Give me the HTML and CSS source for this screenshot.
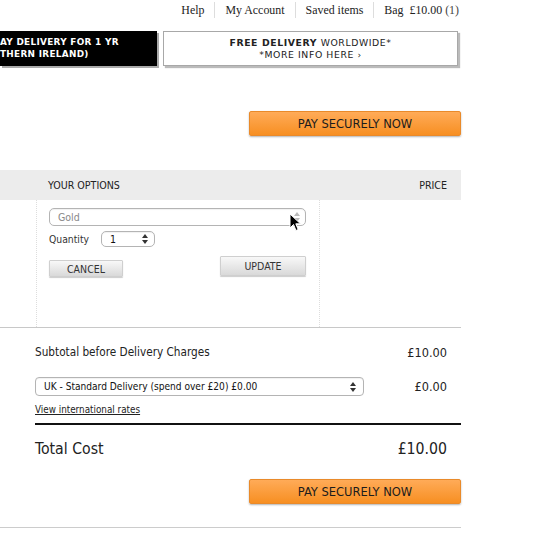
FILE: index.html
```html
<!DOCTYPE html>
<html>
<head>
<meta charset="utf-8">
<link rel="stylesheet" href="styles.css">
</head>
<body>
<div class="page">
  <nav class="toplinks">
    <a class="tl first">Help</a>
    <a class="tl">My Account</a>
    <a class="tl">Saved items</a>
    <a class="tl">Bag&nbsp; £10.00 <span class="count">(1)</span></a>
  </nav>

  <div class="banners">
    <div class="banner dark">
      <div>AY DELIVERY FOR 1 YR</div>
      <div>THERN IRELAND)</div>
    </div>
    <div class="banner light">
      <div><b>FREE DELIVERY</b> WORLDWIDE*</div>
      <div>*MORE INFO HERE ›</div>
    </div>
  </div>

  <div class="pay-row top">
    <button class="pay">PAY SECURELY NOW</button>
  </div>

  <div class="basket-head">
    <span>YOUR OPTIONS</span>
    <span>PRICE</span>
  </div>

  <div class="options-wrap">
    <div class="options">
      <div class="fsel gold"><span>Gold</span><svg class="arr" width="6" height="10" viewBox="0 0 6 10"><path d="M0 4 L3 0 L6 4 Z M0 6 L3 10 L6 6 Z" fill="#bbb"/></svg></div>
      <div class="qty-row">
        <span class="qlabel">Quantity</span>
        <div class="fsel qty"><span>1</span><svg class="arr" width="6" height="10" viewBox="0 0 6 10"><path d="M0 4 L3 0 L6 4 Z M0 6 L3 10 L6 6 Z" fill="#333"/></svg></div>
      </div>
      <div class="btn-row">
        <button class="gbtn cancel">CANCEL</button>
        <button class="gbtn update">UPDATE</button>
      </div>
    </div>
  </div>

  <div class="totals">
    <div class="trow subtotal">
      <span class="label">Subtotal before Delivery Charges</span>
      <span>£10.00</span>
    </div>
    <div class="trow delivery">
      <div class="fsel deliv"><span>UK - Standard Delivery (spend over £20) £0.00</span><svg class="arr" width="6" height="10" viewBox="0 0 6 10"><path d="M0 4 L3 0 L6 4 Z M0 6 L3 10 L6 6 Z" fill="#333"/></svg></div>
      <span>£0.00</span>
    </div>
    <a class="intl">View international rates</a>
    <div class="trow total">
      <span>Total Cost</span>
      <span>£10.00</span>
    </div>
  </div>

  <div class="pay-row bottom">
    <button class="pay">PAY SECURELY NOW</button>
  </div>
  <div class="endline"></div>
</div>

<svg class="cursor" width="12" height="19" viewBox="0 0 12 19">
  <path d="M1 1 L1 15 L4.5 11.5 L7 17.5 L9.2 16.5 L6.8 10.8 L11.5 10.8 Z" fill="#000" stroke="#fff" stroke-width="1"/>
</svg>
</body>
</html>
```

FILE: styles.css
```css
html, body {
  margin: 0;
  padding: 0;
  background: #fff;
}
body {
  font-family: "DejaVu Sans", Verdana, sans-serif;
  font-stretch: condensed;
  color: #222;
  width: 537px;
  height: 537px;
  overflow: hidden;
  position: relative;
}
.page {
  width: 461px;
}

/* top links */
.toplinks {
  display: flex;
  justify-content: flex-end;
  height: 19px;
  align-items: center;
  font-family: "Liberation Serif", "Times New Roman", serif;
  font-stretch: normal;
  font-size: 11.9px;
  color: #222;
  padding-right: 2px;
}
.tl {
  padding: 0 10px;
  border-left: 1px solid #ddd;
  line-height: 16px;
}
.tl.first { border-left: none; }
.tl:last-child { padding-right: 0; }
.count { color: #444; }

/* banners */
.banners {
  display: flex;
  margin-top: 12px;
  gap: 6px;
  height: 36px;
}
.banner {
  box-sizing: border-box;
  height: 35px;
  font-size: 9.3px;
  line-height: 12px;
  letter-spacing: 0.3px;
}
.banner.dark {
  width: 157px;
  background: #000;
  color: #fff;
  font-weight: bold;
  font-stretch: normal;
  font-size: 8.9px;
  padding-top: 5px;
  box-shadow: 2px 2px 0 #aaa;
}
.banner.light {
  width: 295px;
  border: 1px solid #a8a8a8;
  background: #fff;
  color: #222;
  text-align: center;
  font-stretch: normal;
  padding-top: 5px;
  box-shadow: 2px 2px 1px #bbb;
  letter-spacing: 0.6px;
}

/* pay buttons */
.pay-row {
  display: flex;
  justify-content: flex-end;
}
.pay-row.top { margin-top: 44px; }
.pay {
  width: 212px;
  height: 25px;
  border: 1px solid #e98a2a;
  border-radius: 2px;
  background: linear-gradient(#ffab58, #f78f22);
  color: #1c1c1c;
  font-family: "DejaVu Sans", Verdana, sans-serif;
  font-stretch: condensed;
  font-size: 12.8px;
  padding: 0;
  box-shadow: 0 1px 2px rgba(0,0,0,0.3);
}

/* basket header */
.basket-head {
  margin-top: 34px;
  height: 30px;
  background: #ececec;
  display: flex;
  justify-content: space-between;
  align-items: center;
  font-size: 10.6px;
  padding: 0 14px 0 48px;
  color: #222;
}

/* options */
.options-wrap {
  height: 127px;
  border-bottom: 1px solid #c8c8c8;
  padding-left: 36px;
}
.options {
  width: 284px;
  height: 100%;
  box-sizing: border-box;
  border-left: 1px dotted #ddd;
  border-right: 1px dotted #ddd;
  padding: 8px 13px 0 12px;
}
.fsel {
  box-sizing: border-box;
  border: 1px solid #b4b4b4;
  border-radius: 5px;
  display: flex;
  align-items: center;
  justify-content: space-between;
  background: #fff;
  box-shadow: inset 0 1px 1px rgba(0,0,0,0.06);
}
.fsel.gold {
  width: 257px;
  height: 18px;
  padding: 0 5px 0 8px;
  font-size: 10.5px;
  color: #888;
}
.qty-row {
  display: flex;
  align-items: center;
  margin-top: 5px;
  font-size: 10.3px;
}
.qlabel {
  width: 52px;
  color: #333;
}
.fsel.qty {
  width: 54px;
  height: 16px;
  padding: 0 6px 0 8px;
  font-size: 10.5px;
  color: #111;
}
.btn-row {
  display: flex;
  justify-content: space-between;
  align-items: flex-start;
  margin-top: 9px;
  width: 257px;
}
.gbtn {
  font-family: "DejaVu Sans", Verdana, sans-serif;
  font-stretch: condensed;
  font-size: 10.5px;
  color: #333;
  border: 1px solid #cfcfcf;
  border-radius: 1px;
  background: linear-gradient(#f8f8f8, #d9d9d9);
  box-shadow: 0 1px 1px rgba(0,0,0,0.2);
  padding: 0;
}
.gbtn.cancel {
  width: 74px;
  height: 17px;
  margin-top: 4px;
}
.gbtn.update {
  width: 86px;
  height: 20px;
}

/* totals */
.totals {
  padding: 0 14px 0 35px;
}
.trow {
  display: flex;
  justify-content: space-between;
  align-items: center;
}
.trow.subtotal {
  margin-top: 15px;
  height: 18px;
  font-size: 12.6px;
}
.trow.subtotal .label {
  font-size: 11.7px;
}
.trow.delivery {
  margin-top: 16px;
  height: 19px;
  font-size: 12.6px;
}
.fsel.deliv {
  width: 329px;
  height: 19px;
  border-radius: 4px;
  padding: 0 7px 0 8px;
  font-size: 10.1px;
  color: #111;
}
.intl {
  display: block;
  margin-top: 8px;
  font-size: 9.8px;
  color: #222;
  text-decoration: underline;
  line-height: 12px;
  padding-bottom: 7px;
  border-bottom: 2px solid #111;
  margin-right: -14px;
}
.trow.total {
  margin-top: 12px;
  height: 22px;
  font-size: 15.7px;
}
.pay-row.bottom { margin-top: 20px; }
.endline {
  margin-top: 23px;
  border-top: 1px solid #ccc;
}

.cursor {
  position: absolute;
  left: 289px;
  top: 213px;
}
```
